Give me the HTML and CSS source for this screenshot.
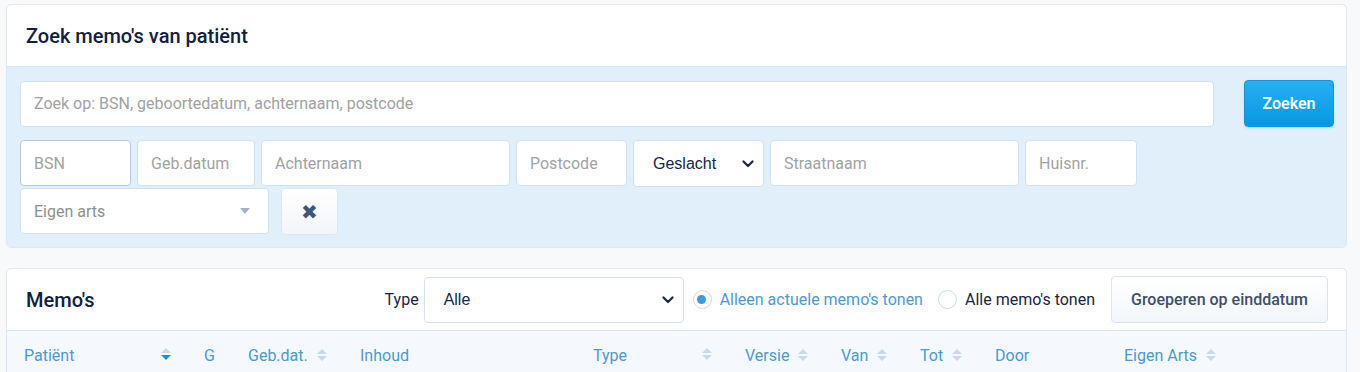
FILE: index.html
```html
<!DOCTYPE html>
<html lang="nl">
<head>
<meta charset="utf-8">
<title>Memo's</title>
<link rel="stylesheet" href="styles.css">
</head>
<body>
<section class="card">
  <header class="card-head">
    <h2 class="card-title">Zoek memo's van patiënt</h2>
  </header>
  <div class="search-body">
    <div class="search-row">
      <input class="field field-main" type="text" placeholder="Zoek op: BSN, geboortedatum, achternaam, postcode">
      <button class="btn-primary" type="button">Zoeken</button>
    </div>
    <div class="filter-wrap">
      <input class="field field-focus w-bsn" type="text" placeholder="BSN">
      <input class="field w-geb" type="text" placeholder="Geb.datum">
      <input class="field w-wide" type="text" placeholder="Achternaam">
      <input class="field w-bsn" type="text" placeholder="Postcode">
      <div class="select-box w-gesl">
        <span class="select-text">Geslacht</span>
        <svg class="chev" width="12" height="8" viewBox="0 0 12 8"><path d="M1.5 1.5 6 6l4.5-4.5" fill="none" stroke="#1a2540" stroke-width="2.2" stroke-linecap="round" stroke-linejoin="round"/></svg>
      </div>
      <input class="field w-wide" type="text" placeholder="Straatnaam">
      <input class="field w-huis" type="text" placeholder="Huisnr.">
      <div class="field combo w-wide">
        <span class="combo-ph">Eigen arts</span>
        <span class="combo-caret"></span>
      </div>
      <button class="btn-clear" type="button" aria-label="Wissen">&#10006;</button>
    </div>
  </div>
</section>

<section class="card card-memos">
  <header class="card-head memo-head">
    <h2 class="card-title">Memo's</h2>
    <div class="memo-tools">
      <span class="lbl">Type</span>
      <div class="select-box w-type">
        <span class="select-text">Alle</span>
        <svg class="chev" width="12" height="8" viewBox="0 0 12 8"><path d="M1.5 1.5 6 6l4.5-4.5" fill="none" stroke="#1a2540" stroke-width="2.2" stroke-linecap="round" stroke-linejoin="round"/></svg>
      </div>
      <label class="radio radio-on"><span class="dot"></span>Alleen actuele memo's tonen</label>
      <label class="radio"><span class="dot"></span>Alle memo's tonen</label>
      <button class="btn-light" type="button">Groeperen op einddatum</button>
    </div>
  </header>
  <table class="grid">
    <colgroup>
      <col style="width:180px"><col style="width:44px"><col style="width:112px"><col style="width:233px"><col style="width:152px"><col style="width:96px"><col style="width:79px"><col style="width:75px"><col style="width:129px"><col>
    </colgroup>
    <thead>
      <tr>
        <th><div class="th-split">Patiënt <span class="sort sort-desc"></span></div></th>
        <th>G</th>
        <th>Geb.dat. <span class="sort"></span></th>
        <th>Inhoud</th>
        <th><div class="th-split">Type <span class="sort"></span></div></th>
        <th>Versie <span class="sort"></span></th>
        <th>Van <span class="sort"></span></th>
        <th>Tot <span class="sort"></span></th>
        <th>Door</th>
        <th>Eigen Arts <span class="sort"></span></th>
      </tr>
    </thead>
  </table>
</section>
</body>
</html>
```
FILE: styles.css
```css
* { box-sizing: border-box; }
html, body { margin: 0; }
body {
  background: #f8f9fb;
  font-family: Roboto, "Noto Sans", Arial, sans-serif;
  color: #14213d;
  padding: 4px 13px 0 6px;
}
.card {
  background: #fff;
  border: 1px solid #dbe8f6;
  border-radius: 5px;
  overflow: hidden;
  width: 1341px;
}
.card-memos { margin-top: 20px; }
.card-head {
  height: 62px;
  padding: 0 19px;
  display: flex;
  align-items: center;
  border-bottom: 1px solid #d4e5f5;
}
.card-title {
  margin: 0;
  font-size: 20px;
  font-weight: 500;
  color: #12203f;
}
.search-body {
  background: #e0eff9;
  padding: 13px 12px 12px 13px;
}
.search-row {
  display: flex;
  align-items: center;
  gap: 30px;
  margin-bottom: 13px;
}
.field {
  height: 46px;
  border: 1px solid #cfe0f3;
  border-radius: 4px;
  background: #fff;
  padding: 0 13px;
  font: 16px Roboto, Arial, sans-serif;
  color: #333;
  outline: none;
}
.field::placeholder { color: #a2a2a2; }
.field-main { flex: 1; }
.field-focus { border-color: #b3c8de; }
.btn-primary {
  width: 90px;
  height: 47px;
  border: 1px solid #0a97e0;
  border-radius: 4px;
  background: linear-gradient(#27b0ef, #0598e4);
  color: #fff;
  font: 600 16px Roboto, Arial, sans-serif;
  box-shadow: 0 1px 2px rgba(0, 80, 140, .15);
}
.filter-wrap {
  display: flex;
  flex-wrap: wrap;
  column-gap: 6px;
  row-gap: 1px;
  align-items: flex-start;
}
.w-bsn { width: 111px; }
.w-geb { width: 118px; }
.w-wide { width: 249px; }
.w-huis { width: 112px; }
.w-gesl { width: 131px; height: 47px; }
.w-type { width: 260px; height: 46px; }
.select-box {
  display: flex;
  align-items: center;
  justify-content: space-between;
  background: #fff;
  border: 1px solid #cfe0f3;
  border-radius: 4px;
  padding: 0 9px 0 19px;
}
.select-text {
  font: 16px "Liberation Sans", Arial, sans-serif;
  color: #172444;
}
.combo {
  display: flex;
  align-items: center;
  justify-content: space-between;
  padding-right: 18px;
}
.combo-ph { color: #8f8f8f; }
.combo-caret {
  width: 0; height: 0;
  border-left: 5px solid transparent;
  border-right: 5px solid transparent;
  border-top: 6px solid #a7b3c2;
}
.btn-clear {
  margin-left: 6px;
  width: 57px;
  height: 47px;
  border: 1px solid #dde6f0;
  border-radius: 4px;
  background: linear-gradient(#fff, #f2f5fa);
  color: #3d5677;
  font-size: 20px;
  padding: 0;
}
.memo-head {
  justify-content: space-between;
  padding-right: 18px;
}
.memo-tools {
  display: flex;
  align-items: center;
  font-size: 16px;
}
.lbl { color: #1b2440; margin-right: 5px; }
.radio {
  display: flex;
  align-items: center;
  color: #1b2440;
  margin-left: 9px;
}
.radio-on { color: #4a9bd6; }
.dot {
  width: 19px; height: 19px;
  border: 1.5px solid #c9dcef;
  border-radius: 50%;
  margin-right: 8px;
  background: #fff;
  position: relative;
}
.radio-on .dot { border-color: #c7dcef; }
.radio-on .dot::after {
  content: "";
  position: absolute;
  left: 3.5px; top: 3.5px;
  width: 9px; height: 9px;
  border-radius: 50%;
  background: #3c9ae0;
}
.radio + .radio { margin-left: 15px; }
.btn-light {
  margin-left: 16px;
  width: 217px;
  height: 47px;
  border: 1px solid #d6e3f1;
  border-radius: 4px;
  background: linear-gradient(#fff, #f2f6fb);
  color: #3e4f69;
  font: 500 16px Roboto, Arial, sans-serif;
}
.grid {
  width: 100%;
  border-collapse: collapse;
  table-layout: fixed;
  background: #f5f9fd;
}
.grid th {
  height: 48px;
  text-align: left;
  font-weight: 400;
  font-size: 16px;
  color: #4a9ad5;
  padding: 0 0 0 17px;
  white-space: nowrap;
}
.th-split {
  display: flex;
  align-items: center;
  justify-content: space-between;
  padding-right: 16px;
}
.sort {
  display: inline-block;
  vertical-align: middle;
  position: relative;
  width: 10px;
  height: 12px;
  margin-left: 5px;
  margin-top: -2px;
}
.sort::before, .sort::after {
  content: "";
  position: absolute;
  left: 0;
  border-left: 5px solid transparent;
  border-right: 5px solid transparent;
}
.sort::before { top: 0; border-bottom: 5px solid #c6daec; }
.sort::after { bottom: 0; border-top: 5px solid #c6daec; }
.sort-desc::after { border-top-color: #2b8ad7; }
```
